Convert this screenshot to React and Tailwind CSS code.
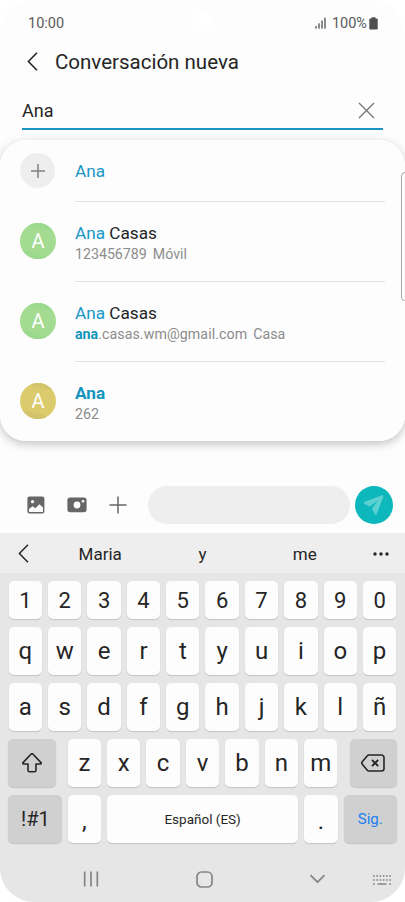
const contacts = [
    { match: "Ana", rest: " Casas", detail: "123456789", label: "Móvil", color: "bg-[#a3dc90]", shade: "bg-[#9bd98e]" },
    { match: "Ana", rest: " Casas", detailMatch: "ana", detail: ".casas.wm@gmail.com", label: "Casa", color: "bg-[#a3dc90]", shade: "bg-[#9bd98e]" },
    { match: "Ana", bold: true, detail: "262", color: "bg-[#dccb6c]", shade: "bg-[#d3c36b]" },
];

const numberRow = ["1", "2", "3", "4", "5", "6", "7", "8", "9", "0"];
const topRow = ["q", "w", "e", "r", "t", "y", "u", "i", "o", "p"];
const middleRow = ["a", "s", "d", "f", "g", "h", "j", "k", "l", "ñ"];
const bottomRow = ["z", "x", "c", "v", "b", "n", "m"];

function Key({ children, className = "" }) {
    return (
        <button
            className={`flex h-full min-w-0 items-center justify-center rounded-[5px] shadow-[0_1px_1px_rgba(0,0,0,0.16)] ${className}`}
        >
            {children}
        </button>
    );
}

function LetterRow({ keys, className }) {
    return (
        <div className={`flex gap-[6px] ${className}`}>
            {keys.map((k) => (
                <Key key={k} className="flex-1 bg-[#fdfdfd]">
                    {k}
                </Key>
            ))}
        </div>
    );
}

function StatusBar() {
    return (
        <div className="flex h-[46px] items-center justify-between pt-[2px] pr-[27px] pl-[28px] text-[14.5px] text-[#5a5a5a]">
            <span>10:00</span>
            <div className="flex items-center">
                <svg className="mr-[5px] mb-[2px] h-[12px] w-[12px]" viewBox="0 0 12 12" fill="#5a5a5a">
                    <rect x="0.3" y="9" width="1.4" height="2.6" />
                    <rect x="3.3" y="6.3" width="1.4" height="5.3" />
                    <rect x="6.3" y="3.5" width="1.4" height="8.1" />
                    <rect x="9.3" y="0.7" width="1.4" height="10.9" />
                </svg>
                <span>100%</span>
                <svg className="mb-[2px] ml-[2px] h-[13px] w-[9px]" viewBox="0 0 9 13" fill="#505050">
                    <path d="M2.5 0.3h4v1.3H8a.7.7 0 0 1 .7.7v9.4a.7.7 0 0 1-.7.7H1a.7.7 0 0 1-.7-.7V2.3A.7.7 0 0 1 1 1.6h1.5z" />
                </svg>
            </div>
        </div>
    );
}

function ContactRow({ contact }) {
    return (
        <li className="flex h-[80px] pl-5">
            <div className={`relative mt-[21px] flex size-[36px] items-center justify-center overflow-hidden rounded-full text-[20px] text-white ${contact.color}`}>
                <span className={`absolute -top-[26px] left-[4px] h-[32px] w-[48px] rotate-12 rounded-full ${contact.shade}`} />
                <span className={`absolute top-[29px] -left-[14px] h-[30px] w-[46px] rotate-12 rounded-full ${contact.shade}`} />
                <span className="relative">A</span>
            </div>
            <div className="ml-[19px] w-[310px] border-b border-[#e2e2e2] pt-[21px]">
                <p className="text-[17.2px] leading-[20px] text-[#252525]">
                    <span className={contact.bold ? "font-bold text-[#1294bd]" : "text-[#1a98c5]"}>{contact.match}</span>
                    {contact.rest}
                </p>
                <p className="mt-[2px] text-[14.2px] leading-[18px] text-[#8c8c8c]">
                    {contact.detailMatch && <span className="font-bold text-[#1294bd]">{contact.detailMatch}</span>}
                    <span className={contact.detailMatch ? "tracking-[0.08px]" : ""}>{contact.detail}</span>
                    {contact.label && <span className="ml-[6px]">{contact.label}</span>}
                </p>
            </div>
        </li>
    );
}

function Suggestions() {
    return (
        <ul className="relative h-[301px] overflow-hidden rounded-[26px] bg-[#fdfdfd]">
            <li className="flex h-[62px] pl-5">
                <div className="mt-[13px] flex size-[35px] items-center justify-center rounded-full bg-[#eee]">
                    <svg className="size-[16px]" viewBox="0 0 16 16" stroke="#808080" strokeWidth="1.5">
                        <path d="M8 1v14M1 8h14" />
                    </svg>
                </div>
                <div className="ml-[20px] w-[310px] border-b border-[#e2e2e2] pt-[21px] text-[17.2px] leading-[20px] text-[#1a98c5]">
                    Ana
                </div>
            </li>
            {contacts.map((c, i) => (
                <ContactRow key={i} contact={c} />
            ))}
        </ul>
    );
}

function ComposeBar() {
    return (
        <div className="flex h-[38px] items-center pr-[12px] pl-[27px]">
            <svg className="size-[18px]" viewBox="0 0 18 18">
                <rect x="0.4" y="0.4" width="17" height="17" rx="2.2" fill="#666" />
                <circle cx="5.5" cy="5.7" r="1.6" fill="#fdfdfd" />
                <path d="M2 13 5.5 10.2 8.3 12.2 12.4 8.3 16 11.6V16H2z" fill="#fdfdfd" />
            </svg>
            <svg className="ml-[22px] h-[16px] w-[20px]" viewBox="0 0 20 16">
                <rect x="0.4" y="0.6" width="19.2" height="14.6" rx="2.6" fill="#666" />
                <circle cx="10" cy="8" r="3.4" fill="#fdfdfd" />
                <circle cx="16" cy="4.3" r="1.3" fill="#fdfdfd" />
            </svg>
            <svg className="ml-[22px] size-[18px]" viewBox="0 0 18 18" stroke="#666" strokeWidth="1.5">
                <path d="M9 .5v17M.5 9h17" />
            </svg>
            <div className="ml-[21px] h-[38px] w-[202px] rounded-full bg-[#eee]" />
            <div className="ml-[5px] flex size-[38px] items-center justify-center rounded-full bg-[#0cb8bc]">
                <svg className="size-[22px]" viewBox="0 0 22 22" fill="#5bd0d1">
                    <path d="M19 1.2 1.7 7.8c-1 .4-1 1.6-.1 2.1L6.7 12.4 14.6 6.8 9 14.6 11.6 20c.5 1 1.8.9 2.2-.1L20.4 2.7c.4-1-.4-1.8-1.4-1.5z" />
                </svg>
            </div>
        </div>
    );
}

function Keyboard() {
    return (
        <div className="h-[329px] bg-[#e6e6e6] pt-[8px] text-[24px] text-[#252525]">
            <LetterRow keys={numberRow} className="mx-[8.7px] h-[38px] text-[22px]" />
            <LetterRow keys={topRow} className="mx-[8.7px] mt-[8px] h-[48px]" />
            <LetterRow keys={middleRow} className="mx-[8.7px] mt-[8px] h-[47.5px]" />
            <div className="mx-[8px] mt-[8px] flex h-[48px] justify-between">
                <Key className="w-[47.5px] bg-[#d0d0d0]">
                    <svg className="size-[20px]" viewBox="0 0 20 20" fill="none" stroke="#252525" strokeWidth="1.6" strokeLinejoin="round">
                        <path d="M9.2 1 1 9.6c-.6.6-.3 1.4.5 1.4H6v6.2c0 1 .6 1.6 1.5 1.6h5c.9 0 1.5-.6 1.5-1.6V11h4.5c.8 0 1.1-.8.5-1.4L10.8 1a1.1 1.1 0 0 0-1.6 0z" />
                    </svg>
                </Key>
                <LetterRow keys={bottomRow} className="w-[269.7px]" />
                <Key className="w-[47.5px] bg-[#d0d0d0]">
                    <svg className="h-[18px] w-[24px]" viewBox="0 0 24 18" fill="none" stroke="#252525" strokeWidth="1.6" strokeLinejoin="round">
                        <path d="M8 1h12.5A2.5 2.5 0 0 1 23 3.5v11a2.5 2.5 0 0 1-2.5 2.5H8a2.5 2.5 0 0 1-1.9-.9L1.3 10.2a1.8 1.8 0 0 1 0-2.4L6.1 1.9A2.5 2.5 0 0 1 8 1z" />
                        <path d="m11 5.8 6.2 6.4M17.2 5.8 11 12.2" strokeWidth="1.9" />
                    </svg>
                </Key>
            </div>
            <div className="mx-[8px] mt-[8px] flex h-[48px] gap-[6px]">
                <Key className="w-[53.7px] bg-[#d0d0d0] pl-px text-[20px]">!#1</Key>
                <Key className="w-[33.3px] bg-[#fdfdfd] pt-1">,</Key>
                <Key className="flex-1 bg-[#fdfdfd] pt-[2px] text-[13.5px]">Español (ES)</Key>
                <Key className="w-[33.3px] bg-[#fdfdfd] pt-1">.</Key>
                <Key className="w-[53.5px] bg-[#d0d0d0] pt-[2px] text-[15px] text-[#1a7df0]">Sig.</Key>
            </div>
            <div className="flex h-[59px] items-center pt-[14px] pl-[83px]">
                <svg className="h-[16px] w-[16px]" viewBox="0 0 16 16" stroke="#858585" strokeWidth="1.7">
                    <path d="M1.7.5v15M8 .5v15M14.3.5v15" />
                </svg>
                <svg className="ml-[97px] size-[17px]" viewBox="0 0 17 17" fill="none" stroke="#858585" strokeWidth="1.7">
                    <rect x="1" y="1" width="15" height="15" rx="4.5" />
                </svg>
                <svg className="ml-[96px] h-[10px] w-[17px]" viewBox="0 0 17 10" fill="none" stroke="#858585" strokeWidth="1.7">
                    <path d="m1.5 1.2 7 7 7-7" />
                </svg>
                <svg className="mt-px ml-[46px] h-[12px] w-[20px]" viewBox="0 0 20 12" stroke="#858585" strokeWidth="1.6">
                    <path d="M1 2h18M1 6h18" strokeDasharray="1.7 1.56" />
                    <path d="M1 10h1.7M5.5 10h9M17.3 10H19" />
                </svg>
            </div>
        </div>
    );
}

export default function App() {
    return (
        <div className="h-[902px] w-[405px] overflow-hidden bg-white font-['Roboto','Liberation_Sans',sans-serif]">
            <div className="relative flex h-full flex-col overflow-hidden rounded-[34px] bg-[#fdfdfd]">
                {/* Front camera */}
                <span className="absolute top-[12px] left-[192px] size-[20px] rounded-full bg-white" />
                <StatusBar />
                <header className="flex h-[32px] items-center pl-[27px]">
                    <svg className="mb-[2px] h-[19px] w-[11px]" viewBox="0 0 11 19" fill="none" stroke="#252525" strokeWidth="1.6">
                        <path d="M10 .8 1.4 9.5 10 18.2" />
                    </svg>
                    <h1 className="ml-[17px] text-[20.5px] text-[#252525]">Conversación nueva</h1>
                </header>
                <div className="mx-[22px] flex h-[52px] items-center justify-between border-b-2 border-[#1b93c0] pt-[14px] pr-[8px]">
                    <span className="text-[18px] text-[#252525]">Ana</span>
                    <svg className="size-[17px]" viewBox="0 0 17 17" stroke="#777" strokeWidth="1.4">
                        <path d="m1 1 15 15M16 1 1 16" />
                    </svg>
                </div>
                <div className="relative mt-[10px] rounded-[26px] shadow-[0_3px_10px_rgba(0,0,0,0.24)]">
                    <Suggestions />
                    {/* Edge panel handle */}
                    <span className="absolute top-[32px] -right-[8px] h-[129px] w-[12px] rounded-[4px] border border-[#a8a8a8] bg-[#fdfdfd]" />
                </div>
                <div className="mt-[45px]">
                    <ComposeBar />
                </div>
                <div className="mt-[9px] flex h-[40px] shrink-0 items-center bg-[#eee] pl-[18px] text-[17px] text-[#252525]">
                    <svg className="h-[19px] w-[11px]" viewBox="0 0 11 19" fill="none" stroke="#252525" strokeWidth="1.5">
                        <path d="M10 .8 1.4 9.5 10 18.2" />
                    </svg>
                    <div className="ml-[20px] grid w-[307px] grid-cols-3 pt-[3px] text-center">
                        <span>Maria</span>
                        <span>y</span>
                        <span>me</span>
                    </div>
                    <svg className="mt-px ml-[17px] h-[4px] w-[16px]" viewBox="0 0 16 4" fill="#252525">
                        <circle cx="2" cy="2" r="1.7" />
                        <circle cx="8" cy="2" r="1.7" />
                        <circle cx="14" cy="2" r="1.7" />
                    </svg>
                </div>
                <Keyboard />
            </div>
        </div>
    );
}
